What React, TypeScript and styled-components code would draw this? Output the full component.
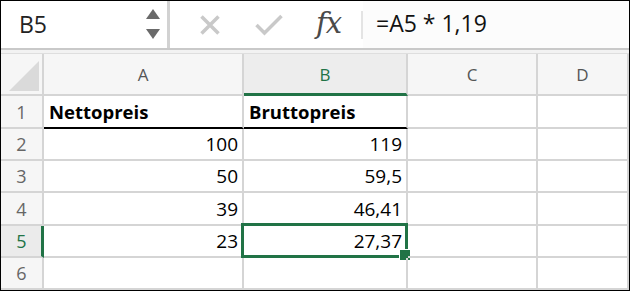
import React from "react";
import styled, { createGlobalStyle } from "styled-components";

const Global = createGlobalStyle`
  html, body { margin: 0; padding: 0; background: #fff; }
  * { box-sizing: border-box; }
`;

const FONT = `"Open Sans", Lato, "Liberation Sans", sans-serif`;
const GREEN = "#217346";
const GRID = "#d5d5d5";

const Window = styled.div`
  width: 630px;
  height: 291px;
  border: 1px solid #000;
  display: flex;
  flex-direction: column;
  overflow: hidden;
  font-family: ${FONT};
  background: #fff;
`;

const FormulaBar = styled.div`
  height: 49px;
  display: flex;
  align-items: stretch;
  border-bottom: 2px solid #c9c9c9;
  flex: none;
`;

const NameBox = styled.div`
  width: 166px;
  display: flex;
  align-items: center;
  padding-left: 18px;
  font-size: 23px;
  color: #222;
`;

const NameText = styled.span`
  flex: 1;
  padding-bottom: 2px;
`;

const Spinner = styled.div`
  display: flex;
  flex-direction: column;
  gap: 10px;
  margin-right: 7px;
  margin-bottom: 1px;
`;

const Arrow = styled.div<{ $up?: boolean }>`
  width: 0;
  height: 0;
  border-left: 7px solid transparent;
  border-right: 7px solid transparent;
  ${(p) =>
    p.$up
      ? `border-bottom: 10px solid #6a6a6a;`
      : `border-top: 10px solid #6a6a6a;`}
`;

const VSep = styled.div`
  width: 3px;
  background: #d2d2d2;
  flex: none;
`;

const IconButton = styled.div<{ $w: number }>`
  width: ${(p) => p.$w}px;
  display: flex;
  align-items: center;
  justify-content: center;
  flex: none;
`;

const Fx = styled.span`
  font-family: "DejaVu Serif", "Liberation Serif", serif;
  font-style: italic;
  font-size: 29px;
  color: #4a4a4a;
  letter-spacing: -1px;
  padding-bottom: 4px;
  padding-left: 8px;
`;

const ThinSep = styled.div`
  width: 2px;
  margin: 10px 0 9px;
  background: #e4e4e4;
  flex: none;
`;

const FormulaInput = styled.div`
  flex: 1;
  display: flex;
  align-items: center;
  padding-left: 13px;
  padding-bottom: 3px;
  font-size: 23px;
  color: #111;
  background: #fcfcfc;
`;

const Gap = styled.div`
  height: 4px;
  background: #f2f2f2;
  border-bottom: 1px solid #dedede;
  flex: none;
`;

const Sheet = styled.div`
  flex: 1;
  display: grid;
  grid-template-columns: 43px 200px 164px 130px 1fr;
  grid-template-rows: 42px 33px 32px 32px 33px 32px 1fr;
`;

const Cell = styled.div<{
  $align?: "left" | "right";
  $bold?: boolean;
  $underline?: boolean;
}>`
  position: relative;
  border-right: 2px solid ${GRID};
  border-bottom: 2px solid ${(p) => (p.$underline ? "#000" : GRID)};
  display: flex;
  align-items: center;
  justify-content: ${(p) => (p.$align === "left" ? "flex-start" : "flex-end")};
  padding: ${(p) => (p.$align === "left" ? "0 0 0 5px" : "0 4px 0 0")};
  font-size: ${(p) => (p.$bold ? "18.5px" : "19px")};
  font-weight: ${(p) => (p.$bold ? 700 : 400)};
  color: #000;
`;

const ColHead = styled.div<{ $active?: boolean }>`
  border-right: 2px solid ${GRID};
  border-bottom: ${(p) => (p.$active ? `3px solid ${GREEN}` : `2px solid ${GRID}`)};
  background: ${(p) => (p.$active ? "#ededed" : "#f6f6f6")};
  color: ${(p) => (p.$active ? GREEN : "#555")};
  display: flex;
  align-items: center;
  justify-content: center;
  font-size: 17px;
  padding-top: ${(p) => (p.$active ? "1px" : "0")};
`;

const Corner = styled.div`
  border-right: 2px solid ${GRID};
  border-bottom: 2px solid ${GRID};
  background: #f6f6f6;
  display: flex;
  align-items: flex-end;
  justify-content: flex-end;
  padding: 0 3px 3px 0;
`;

const CornerTri = styled.div`
  width: 0;
  height: 0;
  border-left: 30px solid transparent;
  border-bottom: 30px solid #dadada;
`;

const RowHead = styled.div<{ $active?: boolean }>`
  border-right: ${(p) => (p.$active ? `3px solid ${GREEN}` : `2px solid ${GRID}`)};
  border-bottom: 2px solid ${GRID};
  background: ${(p) => (p.$active ? "#ebebeb" : "#f6f6f6")};
  color: ${(p) => (p.$active ? GREEN : "#666")};
  display: flex;
  align-items: center;
  justify-content: center;
  font-size: 18px;
  padding-left: ${(p) => (p.$active ? "1px" : "0")};
`;

const Selection = styled.div`
  position: absolute;
  left: -3px;
  top: -3px;
  right: -2px;
  bottom: -2px;
  border: 3px solid ${GREEN};
  pointer-events: none;
`;

const Handle = styled.div`
  position: absolute;
  right: -6px;
  bottom: -6px;
  width: 12px;
  height: 12px;
  background: ${GREEN};
  border: 1px solid #fff;
`;

const XIcon = () => (
  <svg width="22" height="22" viewBox="0 0 22 22">
    <path d="M2.5 2.5 L19.5 19.5 M19.5 2.5 L2.5 19.5" stroke="#c9c9c9" strokeWidth="3.5" fill="none" />
  </svg>
);

const CheckIcon = () => (
  <svg width="30" height="22" viewBox="0 0 30 22">
    <path d="M2.5 11 L10.5 19 L27.5 2" stroke="#c9c9c9" strokeWidth="3.5" fill="none" />
  </svg>
);

const rows: { n: number; a: string; b: string; header?: boolean }[] = [
  { n: 1, a: "Nettopreis", b: "Bruttopreis", header: true },
  { n: 2, a: "100", b: "119" },
  { n: 3, a: "50", b: "59,5" },
  { n: 4, a: "39", b: "46,41" },
  { n: 5, a: "23", b: "27,37" },
  { n: 6, a: "", b: "" },
];

export default function App() {
  return (
    <>
      <Global />
      <Window>
        <FormulaBar>
          <NameBox>
            <NameText>B5</NameText>
            <Spinner>
              <Arrow $up />
              <Arrow />
            </Spinner>
          </NameBox>
          <VSep />
          <IconButton $w={80}>
            <XIcon />
          </IconButton>
          <IconButton $w={38}>
            <CheckIcon />
          </IconButton>
          <IconButton $w={73}>
            <Fx>fx</Fx>
          </IconButton>
          <ThinSep />
          <FormulaInput>=A5 * 1,19</FormulaInput>
        </FormulaBar>
        <Gap />
        <Sheet>
          <Corner>
            <CornerTri />
          </Corner>
          <ColHead>A</ColHead>
          <ColHead $active>B</ColHead>
          <ColHead>C</ColHead>
          <ColHead>D</ColHead>
          {rows.map((r) => (
            <React.Fragment key={r.n}>
              <RowHead $active={r.n === 5}>{r.n}</RowHead>
              <Cell $align={r.header ? "left" : "right"} $bold={r.header} $underline={r.header}>
                {r.a}
              </Cell>
              <Cell $align={r.header ? "left" : "right"} $bold={r.header} $underline={r.header}>
                {r.b}
                {r.n === 5 && (
                  <Selection>
                    <Handle />
                  </Selection>
                )}
              </Cell>
              <Cell />
              <Cell />
            </React.Fragment>
          ))}
        </Sheet>
      </Window>
    </>
  );
}
